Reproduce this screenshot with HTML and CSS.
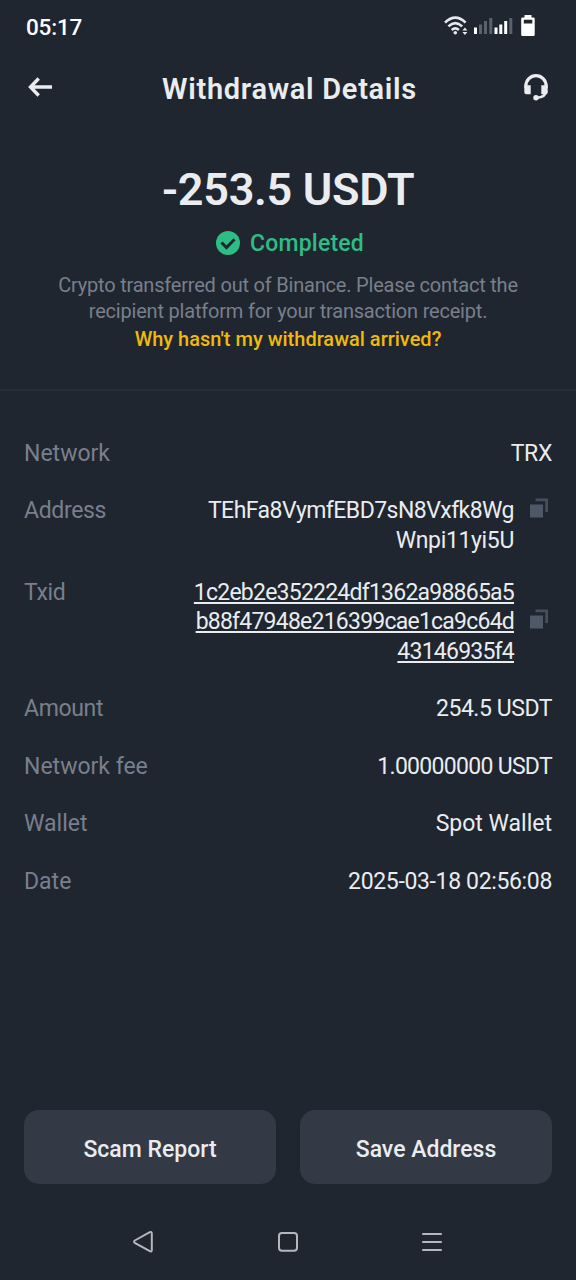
FILE: index.html
```html
<!DOCTYPE html>
<html lang="en">
<head>
<meta charset="utf-8">
<title>Withdrawal Details</title>
<link rel="stylesheet" href="styles.css">
</head>
<body>
<div class="screen">
  <div class="status-bar">
    <span class="clock">05:17</span>
    <svg class="status-icons" width="96" height="24" viewBox="0 0 96 24" fill="none">
      <g stroke="#e6e8ee" stroke-width="2.6">
        <path d="M3 7.600Q13.300-2.400 23.600 7.600"/><path d="M6.400 11.400Q13.300 4.900 20.200 11.400"/><path d="M9.700 15Q13.300 11.800 16.900 15"/>
      </g>
      <circle cx="13.300" cy="17.700" r="1.800" fill="#e6e8ee"/>
      <path d="M20.400 15.400l2.500-3 2.500 3zM20.400 17l2.500 3 2.500-3z" fill="#e6e8ee"/>
      <path d="M32 12.500h3v6.500h-3zM52.500 12.500h3v6.500h-3zM57.300 9.500h3v9.500h-3zM62.200 6h3v13h-3z" fill="#fff"/>
      <path d="M37 9.500h3v9.500h-3zM42 6h3v13h-3zM47.300 3h3v16h-3zM67.300 3h3v16h-3z" fill="#5b616b"/>
      <path fill-rule="evenodd" d="M82.500 0h7v2.500h2q1.200 0 1.200 1.200v16.100q0 1.200-1.200 1.200h-11.100q-1.200 0-1.200-1.200V3.700q0-1.200 1.200-1.200h2.100zM81.800 4.700v3.800h8.500V4.700z" fill="#fff"/>
    </svg>
  </div>
  <header class="app-bar">
    <svg class="back" width="26" height="22" viewBox="0 0 26 22" fill="none" stroke="#eaecef" stroke-width="3.400"><path d="M3.500 11H25M11.700 2.500L3.500 11L11.700 19.500"/></svg>
    <h1 class="title">Withdrawal Details</h1>
    <svg class="support" width="26" height="28" viewBox="0 0 26 28" fill="none"><path d="M2.900 14V12A10.100 10.300 0 0 1 23.100 12V14" stroke="#eaecef" stroke-width="3.200"/><path d="M1.300 11.200h6.400v9H3.300q-2 0-2-2zM18.300 11.200h6.400v7q0 2-2 2h-4.400z" fill="#eaecef"/><path d="M23.500 17Q22.500 23.200 14 23.800" stroke="#eaecef" stroke-width="2.400"/><circle cx="13" cy="23.800" r="2.700" fill="#eaecef"/></svg>
  </header>
  <section class="summary">
    <div class="total">-253.5 USDT</div>
    <div class="state">
      <svg width="24" height="24" viewBox="0 0 24 24"><circle cx="12" cy="12" r="12" fill="#2ebd85"/><path d="M5.500 11.500l5 5L18.500 8.300" fill="none" stroke="#1f2630" stroke-width="3"/></svg>
      <span>Completed</span>
    </div>
    <p class="note">Crypto transferred out of Binance. Please contact the<br>recipient platform for your transaction receipt.</p>
    <a class="help">Why hasn't my withdrawal arrived?</a>
  </section>
  <dl class="details">
    <div class="row"><dt>Network</dt><dd class="snug">TRX</dd></div>
    <div class="row address"><dt class="snug">Address</dt><dd><span class="lines"><span class="hash">TEhFa8VymfEBD7sN8Vxfk8Wg</span><br><span class="snug">Wnpi11yi5U</span></span><svg class="copy" width="18" height="20" viewBox="0 0 18 20"><path d="M0 6.500h13v13H0z" fill="#4f5867"/><path d="M5.500.500H18V14h-2.800V3.300H5.500z" fill="#454e5c"/></svg></dd></div>
    <div class="row txid"><dt class="snug">Txid</dt><dd><span class="lines">1c2eb2e352224df1362a98865a5<br>b88f47948e216399cae1ca9c64d<br>43146935f4</span><svg class="copy" width="18" height="20" viewBox="0 0 18 20"><path d="M0 6.500h13v13H0z" fill="#4f5867"/><path d="M5.500.500H18V14h-2.800V3.300H5.500z" fill="#454e5c"/></svg></dd></div>
    <div class="row"><dt class="snug">Amount</dt><dd class="amount">254.5 USDT</dd></div>
    <div class="row"><dt>Network fee</dt><dd class="fee">1.00000000 USDT</dd></div>
    <div class="row"><dt>Wallet</dt><dd>Spot Wallet</dd></div>
    <div class="row"><dt>Date</dt><dd class="snug">2025-03-18 02:56:08</dd></div>
  </dl>
  <div class="actions"><button class="action">Scam Report</button><button class="action">Save Address</button></div>
  <nav class="nav-bar">
    <svg width="24" height="24" viewBox="0 0 24 24"><path d="M2.800 10.500L17.800 2.200Q19.800 1.300 19.800 3.500V20Q19.800 22.200 17.800 21.200L2.800 12.900Q1.300 11.700 2.800 10.500z"/></svg>
    <svg width="24" height="24" viewBox="0 0 24 24"><rect x="3" y="3" width="18" height="17.800" rx="3"/></svg>
    <svg width="24" height="24" viewBox="0 0 24 24"><path d="M2.200 4h19.600M2.200 12h19.600M2.200 20h19.600"/></svg>
  </nav>
</div>
</body>
</html>
```
FILE: styles.css
```css
* { box-sizing: border-box; }
body { margin: 0; background: #1f2630; color: #eaecef; font-family: Roboto, "Noto Sans", sans-serif; }
h1, p, dl, dd { margin: 0; }
svg { display: block; flex: none; }
.screen { width: 576px; height: 1280px; display: flex; flex-direction: column; overflow: hidden; }
.status-bar { height: 52px; padding: 2px 38px 0 26px; display: flex; justify-content: space-between; align-items: center; }
.clock { font-size: 22.5px; font-weight: 500; color: #fff; letter-spacing: -0.2px; }
.app-bar { height: 72px; padding: 0 27px; display: flex; justify-content: space-between; align-items: center; }
.back { margin-bottom: 3px; }
.title { padding: 2px 0 0 3px; font-size: 29px; font-weight: 600; letter-spacing: 0.7px; }
.summary { height: 267px; padding-top: 38px; border-bottom: 2px solid #272e38; display: flex; flex-direction: column; align-items: center; text-align: center; }
.total { font-size: 45px; line-height: 56px; font-weight: 600; letter-spacing: -0.3px; }
.state { display: flex; align-items: center; gap: 10px; margin: 10px 0 0 4px; height: 30px; color: #2ebd85; font-size: 23px; font-weight: 500; letter-spacing: 0.2px; }
.note { margin-top: 14px; font-size: 20px; line-height: 26px; color: #797f8c; letter-spacing: -0.2px; }
.help { margin-top: 1px; font-size: 20px; line-height: 28px; font-weight: 500; color: #f0b90b; }
.details { padding: 48px 24px 0; font-size: 23px; line-height: 29.6px; display: flex; flex-direction: column; gap: 27.9px; }
.row { display: flex; justify-content: space-between; }
.address { margin-bottom: -6px; }
.address dd { align-items: flex-start; }
dt { color: #797f8c; }
dd { display: flex; align-items: center; text-align: right; }
.snug { letter-spacing: -0.35px; }
.amount { letter-spacing: -0.45px; }
.fee { letter-spacing: -0.7px; }
.hash { letter-spacing: -0.54px; }
.copy { margin: 2px 4px 0 16px; }
.txid .copy { margin: 0 4px 5px 16px; }
.txid .lines { letter-spacing: -0.77px; text-decoration: underline; text-decoration-skip-ink: none; }
.actions { margin-top: auto; padding: 0 24px; display: grid; grid-template-columns: 1fr 1fr; gap: 24px; }
.action { height: 74px; padding: 4px 0 0; border: 0; border-radius: 15px; background: #333a46; color: #eaecef; font: 500 23px Roboto, sans-serif; }
.nav-bar { height: 96px; padding: 20px 72px 0; display: grid; grid-template-columns: repeat(3, 1fr); justify-items: center; align-items: center; }
.nav-bar svg { fill: none; stroke: #b4b7bd; stroke-width: 2; }
```
